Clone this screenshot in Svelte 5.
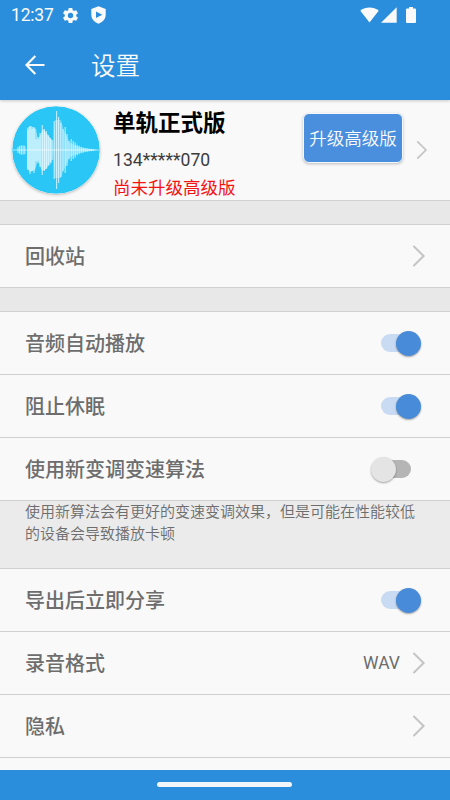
<script>
  let autoPlay = true;
  let keepAwake = true;
  let newAlgorithm = false;
  let shareAfterExport = true;

  // [x, half height] of each bar in the logo
  const wave = [
    [6, 3], [7.7, 4.2], [9.4, 4.6], [11.1, 4.4], [12.8, 4.2],
    [16, 20], [18, 24], [20, 21], [22, 23], [24, 11],
    [26, 13], [28, 17], [30.3, 25], [32.4, 21], [34.3, 19], [36.2, 15], [38.2, 12], [40.2, 10],
    [42.2, 29], [44.6, 39], [46.6, 33], [48.8, 27], [51, 21],
    [53.2, 23], [55, 16], [57, 9], [59.2, 11], [61.2, 9], [63.2, 7.5],
    [65.2, 5.2], [67.2, 4.3], [69.2, 3.3], [71.2, 2.4], [73.2, 1.8],
    [75.2, 1.4], [77.2, 1.1], [79.2, 0.9], [81.2, 0.8]
  ];
</script>

{#snippet chevron(small)}
  <svg class="chevron" class:small viewBox="0 0 14 22">
    <path d="M2 1.5L11.6 11L2 20.5" />
  </svg>
{/snippet}

{#snippet toggle(on)}
  <span class="switch" class:on role="switch" aria-checked={on} tabindex="0"><span class="thumb"></span></span>
{/snippet}

<div class="screen">
  <header>
    <div class="status">
      <span class="time">12:37</span>
      <svg class="gear" width="19" height="19" viewBox="0 0 24 24">
        <path d="M19.14 12.94c.04-.3.06-.61.06-.94 0-.32-.02-.64-.07-.94l2.03-1.58a.49.49 0 0 0 .12-.61l-1.92-3.32a.488.488 0 0 0-.59-.22l-2.39.96c-.5-.38-1.03-.7-1.62-.94l-.36-2.54a.484.484 0 0 0-.48-.41h-3.84c-.24 0-.43.17-.47.41l-.36 2.54c-.59.24-1.13.57-1.62.94l-2.39-.96c-.22-.08-.47 0-.59.22L2.74 8.87c-.12.21-.08.47.12.61l2.03 1.58c-.05.3-.09.63-.09.94s.02.64.07.94l-2.03 1.58a.49.49 0 0 0-.12.61l1.92 3.32c.12.22.37.29.59.22l2.39-.96c.5.38 1.03.7 1.62.94l.36 2.54c.05.24.24.41.48.41h3.84c.24 0 .44-.17.47-.41l.36-2.54c.59-.24 1.13-.56 1.62-.94l2.39.96c.22.08.47 0 .59-.22l1.92-3.32c.12-.22.07-.47-.12-.61l-2.01-1.58zM12 15.4A3.400 3.400 0 1 1 12 8.600a3.400 3.400 0 0 1 0 6.800z" />
      </svg>
      <svg class="shield" width="15" height="18" viewBox="0 0 15 18">
        <path fill-rule="evenodd" d="M7.500 0.300L14.700 3V8.500C14.700 13 11.700 16.300 7.500 17.700C3.300 16.300 0.300 13 0.300 8.500V3ZM5 5.500V12L11.300 8.750Z" />
      </svg>
      <div class="signals">
        <svg width="19" height="16" viewBox="0 0 19 16">
          <path d="M0.300 3.700C5.500-0.700 13.500-0.700 18.700 3.700L9.500 15.500Z" />
        </svg>
        <svg class="cell" width="16" height="16" viewBox="0 0 16 16">
          <path d="M0 15.800L15.700 0.300V15.800Z" />
        </svg>
        <svg class="battery" width="10" height="16" viewBox="0 0 10 16">
          <path d="M3 0H7V1.500H9Q10 1.500 10 2.500V15Q10 16 9 16H1Q0 16 0 15V2.500Q0 1.500 1 1.500H3Z" />
        </svg>
      </div>
    </div>
    <div class="toolbar">
      <svg class="back" width="20" height="20" viewBox="0 0 20 20">
        <path d="M19.500 10H1.800M10.300 1L1.500 10L10.300 19" />
      </svg>
      <h1>设置</h1>
    </div>
  </header>

  <main>
    <section class="profile">
      <svg class="avatar" width="88" height="88" viewBox="0 0 88 88">
        <circle cx="44" cy="44" r="43.800" fill="#2ac7f6" />
        <path d="M15 44V22L19 20L24 23L26 34L31 23L40 34V56L34 63L30 65L26 54L23 64L18 66L15 62Z" fill="#fff" opacity="0.5" />
        <path d="M41 44L43 14H49L52 25L58 37L67 41L84 43.500V44.500L67 47L58 51L52 63L49 72H43Z" fill="#fff" opacity="0.3" />
        <path d="M0.500 44H87.500" stroke="#fff" stroke-width="0.900" opacity="0.7" />
        {#each wave as [x, h]}
          <path d="M{x} {44 - h}V{44 + h}" stroke="#fff" stroke-width="1.100" opacity="0.7" />
        {/each}
      </svg>
      <div class="info">
        <h2>单轨正式版</h2>
        <div class="phone">134*****070</div>
        <div class="notice">尚未升级高级版</div>
      </div>
      <button class="upgrade">升级高级版</button>
      {@render chevron(true)}
    </section>

    <div class="gap"></div>
    <div class="row"><span class="label">回收站</span>{@render chevron(false)}</div>
    <div class="gap"></div>

    <div class="row"><span class="label">音频自动播放</span>{@render toggle(autoPlay)}</div>
    <div class="row"><span class="label">阻止休眠</span>{@render toggle(keepAwake)}</div>
    <div class="row"><span class="label">使用新变调变速算法</span>{@render toggle(newAlgorithm)}</div>
    <p class="note">使用新算法会有更好的变速变调效果，但是可能在性能较低的设备会导致播放卡顿</p>

    <div class="row"><span class="label">导出后立即分享</span>{@render toggle(shareAfterExport)}</div>
    <div class="row"><span class="label">录音格式</span><em>WAV</em>{@render chevron(false)}</div>
    <div class="row"><span class="label">隐私</span>{@render chevron(false)}</div>
    <div class="row"></div>
  </main>

  <footer><div class="handle"></div></footer>
</div>

<style>
  :global(body) {
    margin: 0;
  }

  .screen {
    width: 450px;
    height: 800px;
    display: flex;
    flex-direction: column;
    overflow: hidden;
    background: #f9f9f9;
    font-family: Roboto, "Noto Sans CJK SC", sans-serif;
  }

  header {
    flex: none;
    height: 100px;
    box-sizing: border-box;
    background: #2b8edc;
    color: #fafafa;
    box-shadow: 0 1px 3px rgba(0, 0, 0, .2);
    z-index: 1;
  }

  header svg {
    fill: #fafafa;
  }

  .status {
    display: flex;
    align-items: center;
    height: 30px;
    padding-left: 11px;
  }

  .time {
    width: 50px;
    font-size: 17.5px;
    line-height: 30px;
    letter-spacing: -0.2px;
    white-space: nowrap;
  }

  .shield {
    margin-left: 11px;
  }

  .signals {
    display: flex;
    margin-left: auto;
    padding-right: 34px;
  }

  .cell {
    margin-left: 2px;
  }

  .battery {
    margin-left: 9px;
  }

  .toolbar {
    display: flex;
    align-items: center;
    height: 70px;
    padding-left: 25px;
  }

  .toolbar .back {
    fill: none;
    stroke: #fafafa;
    stroke-width: 2.2;
  }

  h1 {
    margin: 3px 0 0 46px;
    font-size: 24.5px;
    font-weight: 350;
    line-height: 70px;
  }

  main {
    flex: 1;
    min-height: 0;
    overflow: hidden;
  }

  .profile {
    display: flex;
    height: 100px;
    padding: 0 22px 0 12px;
  }

  .avatar {
    flex: none;
    margin-top: 6px;
    border-radius: 50%;
    box-shadow: 0 1px 3px rgba(0, 0, 0, .25);
  }

  .info {
    margin-left: 13px;
    white-space: nowrap;
  }

  h2 {
    margin: 6px 0 0;
    font-size: 22.5px;
    font-weight: 700;
    line-height: 34px;
    color: #000;
  }

  .phone {
    margin-top: 7px;
    font-size: 17.6px;
    line-height: 26px;
    color: #3c3c3c;
  }

  .notice {
    margin-top: 1px;
    font-size: 17.5px;
    line-height: 28px;
    color: #f31414;
  }

  .upgrade {
    width: 100px;
    height: 50px;
    margin: 13px 13px 0 auto;
    padding: 0 0 2px;
    border: 1px solid #f4f7fb;
    border-radius: 6px;
    background: #4a8fde;
    color: #fafafa;
    font-family: inherit;
    font-size: 17.5px;
    font-weight: 350;
    box-shadow: 0 1px 3px rgba(0, 0, 0, .25);
  }

  .chevron {
    flex: none;
    width: 14px;
    height: 22px;
    margin-right: -1px;
    fill: none;
    stroke: #c4c4c4;
    stroke-width: 2;
    stroke-linecap: round;
  }

  .chevron.small {
    width: 12px;
    height: 20px;
    margin: 40px 0 0;
  }

  .gap,
  .row,
  .note {
    box-sizing: border-box;
    border-top: 1px solid #d0d0d0;
  }

  .gap {
    height: 24px;
    background: #e8e8e8;
  }

  .row {
    display: flex;
    align-items: center;
    height: 63px;
    padding: 0 25px;
    color: #6d6d6d;
    font-size: 20px;
    font-weight: 500;
  }

  .label {
    flex: 1;
    padding-bottom: 2px;
  }

  .row em {
    margin-right: 12px;
    font-size: 17.5px;
    font-style: normal;
    font-weight: 400;
  }

  .note {
    height: 68px;
    margin: 0;
    padding: 0 25px;
    background: #ebebeb;
    color: #6d6d6d;
    font-size: 15px;
    font-weight: 350;
    line-height: 22px;
  }

  .switch {
    display: flex;
    align-items: center;
    width: 30px;
    height: 18px;
    margin-right: 14px;
    border-radius: 9px;
    background: #b5b5b5;
  }

  .thumb {
    flex: none;
    width: 25px;
    height: 25px;
    margin-left: -10px;
    border-radius: 50%;
    background: #e4e4e4;
    box-shadow: 0 1px 2px rgba(0, 0, 0, .35);
  }

  .switch.on {
    background: #c9dbf2;
  }

  .switch.on .thumb {
    margin-left: 15px;
    background: #478bd9;
  }

  footer {
    flex: none;
    display: flex;
    justify-content: center;
    height: 30px;
    background: #2b8edc;
  }

  .handle {
    width: 135px;
    height: 5px;
    margin: 12px 1px 0 0;
    border-radius: 3px;
    background: #f2f5f9;
  }
</style>
